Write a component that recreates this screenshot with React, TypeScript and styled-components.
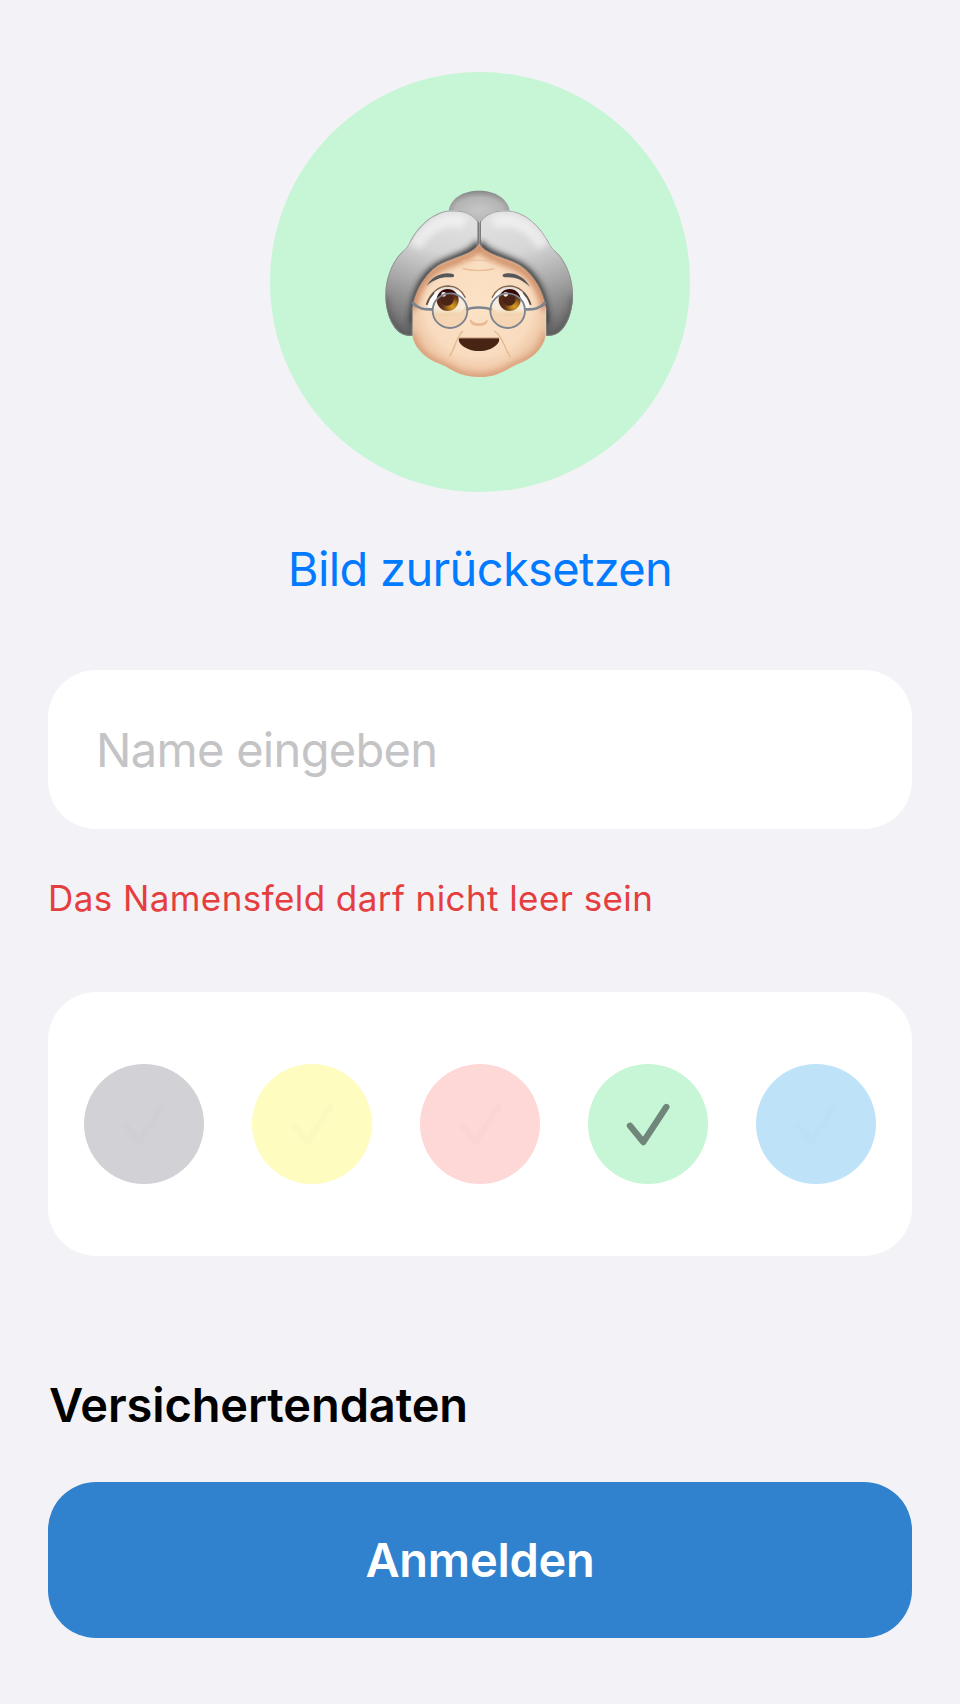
import React, { useState } from "react";
import styled, { createGlobalStyle } from "styled-components";

const GlobalStyle = createGlobalStyle`
  *, *::before, *::after { box-sizing: border-box; }
  body {
    margin: 0;
    background: #f2f2f7;
    font-family: Inter, "Liberation Sans", sans-serif;
  }
  button, input { font-family: inherit; }
`;

const Screen = styled.main`
  display: flex;
  flex-direction: column;
  height: 1704px;
  padding: 72px 48px 66px;
  background: #f2f2f7;
`;

const Avatar = styled.div<{ $color: string }>`
  display: flex;
  justify-content: center;
  align-items: center;
  align-self: center;
  flex: none;
  width: 420px;
  height: 420px;
  padding-top: 6px;
  border-radius: 50%;
  background: ${(p) => p.$color};
`;

const Portrait = styled.svg`
  width: 220px;
  height: 210px;
`;

const ResetButton = styled.button`
  align-self: center;
  margin-top: 48px;
  padding: 0;
  border: 0;
  background: none;
  color: #007aff;
  font-size: 47px;
  line-height: 58px;
  letter-spacing: -0.65px;
  white-space: nowrap;
`;

const NameField = styled.input`
  flex: none;
  width: 100%;
  height: 159px;
  margin-top: 72px;
  padding: 0 48px;
  border: 0;
  outline: 0;
  border-radius: 48px;
  background: #fff;
  color: #000;
  font-size: 47px;
  letter-spacing: -0.69px;
  &::placeholder { color: #c4c4c6; opacity: 1; }
`;

const ErrorText = styled.p`
  margin: 48px 0 0;
  color: #e53e3e;
  font-size: 35px;
  line-height: 43px;
  letter-spacing: 0.42px;
  white-space: nowrap;
`;

const Palette = styled.div`
  display: flex;
  justify-content: space-between;
  align-items: center;
  flex: none;
  height: 264px;
  margin-top: 72px;
  padding: 0 36px;
  border-radius: 48px;
  background: #fff;
`;

const Swatch = styled.button<{ $color: string }>`
  width: 120px;
  height: 120px;
  padding: 0;
  border: 0;
  border-radius: 50%;
  background: ${(p) => p.$color};
`;

const Check = styled.svg<{ $selected: boolean }>`
  display: block;
  width: 120px;
  height: 120px;
  fill: none;
  stroke: ${(p) => (p.$selected ? "#71867b" : "rgba(142, 142, 147, 0.026)")};
  stroke-width: 6.4;
  stroke-linecap: round;
  stroke-linejoin: round;
`;

const SectionTitle = styled.h2`
  margin: auto 0 49px 1px;
  color: #000;
  font-size: 47px;
  font-weight: 600;
  line-height: 57px;
  letter-spacing: -0.13px;
`;

const SubmitButton = styled.button`
  flex: none;
  height: 156px;
  padding: 0 0 2px;
  border: 0;
  border-radius: 48px;
  background: #3182ce;
  color: #fff;
  font-size: 47px;
  font-weight: 600;
  letter-spacing: -0.25px;
`;

const COLORS = ["#d1d1d6", "#fefcbf", "#fed7d7", "#c6f6d5", "#bee3f8"];

const FACE =
  "M127 350 L127 460 C128 500 165 535 205 550 C245 565 265 591 327 591 C389 591 409 565 449 550 C490 535 526 500 527 460 L527 350 C500 260 420 190 327 170 C234 190 154 260 127 350Z";
const HAIR_LEFT =
  "M327 130 C315 105 285 91 245 91 C185 93 140 145 118 188 C108 210 92 215 78 237 C56 270 46 310 46 345 C46 400 70 467 118 467 L127 467 L127 385 C133 340 160 285 205 256 C250 230 310 225 327 190Z";

function Lock({ flip }: { flip?: boolean }) {
  return (
    <g transform={flip ? "matrix(-1 0 0 1 655 0)" : undefined}>
      <path d={HAIR_LEFT} fill="url(#hair)" />
      <g clipPath="url(#lock)">
        <path d="M40 350 C44 410 75 478 130 475 L130 430" fill="none" stroke="#555" strokeWidth="30" opacity=".6" filter="url(#soft)" />
        <path d="M134 430 C136 338 164 290 209 262 C254 234 312 229 331 190" fill="none" stroke="#2c2c2c" strokeWidth="30" filter="url(#soft)" />
        <path d="M327 110 L327 195" stroke="#686868" strokeWidth="9" filter="url(#fine)" />
        <path d="M135 200 C175 130 235 110 285 128" fill="none" stroke="#fff" strokeWidth="38" opacity=".5" filter="url(#soft)" />
        <path d={HAIR_LEFT} fill="none" stroke="#888" strokeWidth="5" opacity=".7" filter="url(#fine)" />
      </g>
    </g>
  );
}

function Eye({ x, flip }: { x: number; flip?: boolean }) {
  const outline = "M-60 25 C-52 -12 -30 -34 2 -34 C30 -33 48 -12 57 14 C52 34 35 48 8 52 C-25 54 -50 44 -60 25Z";
  return (
    <g transform={`translate(${x} 355)`}>
      <g transform={flip ? "scale(-1 1)" : undefined}>
        <path d={outline} fill="url(#eyeWhite)" />
        <path d="M-63 19 C-51 -20 -25 -37 2 -37 C29 -36 45 -20 53 -2" fill="none" stroke="#80664f" strokeWidth="4" />
        <path d="M-63 19 C-58 4 -51 -7 -41 -17" fill="none" stroke="#5c5149" strokeWidth="5" filter="url(#fine)" />
      </g>
      <circle cx="0" cy="5" r="33" fill="url(#iris)" />
      <circle cx="-2" cy="2" r="20" fill="#260500" filter="url(#fine)" />
      <circle cx="-12" cy="-12" r="7" fill="#fff" filter="url(#fine)" />
    </g>
  );
}

function GrandmaPortrait() {
  return (
    <Portrait viewBox="0 0 660 630" aria-hidden="true">
      <defs>
        <filter id="soft" x="-30%" y="-30%" width="160%" height="160%"><feGaussianBlur stdDeviation="10" /></filter>
        <filter id="fine" filterUnits="userSpaceOnUse" x="-100" y="-100" width="860" height="830"><feGaussianBlur stdDeviation="1.8" /></filter>
        <clipPath id="lock"><path d={HAIR_LEFT} /></clipPath>
        <clipPath id="face"><path d={FACE} /></clipPath>
        <linearGradient id="hair" gradientUnits="userSpaceOnUse" x1="230" y1="95" x2="80" y2="467">
          <stop offset="0" stopColor="#e0e0e0" />
          <stop offset=".3" stopColor="#d6d6d6" />
          <stop offset=".6" stopColor="#a6a6a6" />
          <stop offset="1" stopColor="#606060" />
        </linearGradient>
        <radialGradient id="bun" cx=".5" cy=".6" r=".6">
          <stop offset="0" stopColor="#c6c6c6" />
          <stop offset=".65" stopColor="#b5b5b5" />
          <stop offset="1" stopColor="#858585" />
        </radialGradient>
        <radialGradient id="skin" gradientUnits="userSpaceOnUse" cx="327" cy="370" r="245">
          <stop offset="0" stopColor="#fce2c6" />
          <stop offset=".65" stopColor="#f9dcbf" />
          <stop offset="1" stopColor="#e5b591" />
        </radialGradient>
        <linearGradient id="eyeWhite" x1="0" y1="0" x2="0" y2="1">
          <stop offset="0" stopColor="#ded9d2" />
          <stop offset=".25" stopColor="#fff" />
          <stop offset=".75" stopColor="#fdf9f2" />
          <stop offset="1" stopColor="#f2d7ae" />
        </linearGradient>
        <radialGradient id="iris" cx=".72" cy=".8" r=".55">
          <stop offset="0" stopColor="#d89a08" />
          <stop offset=".38" stopColor="#9e6507" />
          <stop offset=".75" stopColor="#481803" />
          <stop offset="1" stopColor="#350700" />
        </radialGradient>
      </defs>

      <path d="M236 92 C242 55 278 32 327 32 C376 32 412 55 419 92 L370 130 L285 130Z" fill="url(#bun)" />
      <path d={FACE} fill="url(#skin)" />
      <g clipPath="url(#face)">
        <path d="M127 390 C133 340 162 290 207 264 C252 240 305 235 327 198 C349 235 402 240 447 264 C492 290 521 340 527 390" fill="none" stroke="#cc8861" strokeWidth="22" filter="url(#soft)" />
        <path d="M127 460 C128 500 165 535 205 550 C245 565 265 591 327 591 C389 591 409 565 449 550 C490 535 526 500 527 460" fill="none" stroke="#ce8b62" strokeWidth="18" opacity=".75" filter="url(#soft)" />
        <path d="M275 244 Q327 236 379 244" fill="none" stroke="#e9bd98" strokeWidth="3" filter="url(#fine)" />
        <path d="M278 266 Q327 277 374 266" fill="none" stroke="#e9b991" strokeWidth="3.5" filter="url(#fine)" />
      </g>
      <path d="M170 317 C187 286 222 275 247 281 C256 284 254 293 242 292 C216 290 194 297 170 317Z" fill="#56575a" />
      <path d="M480 321 C463 288 430 275 404 281 C393 284 397 293 410 292 C436 291 458 300 480 321Z" fill="#56575a" />

      <Eye x={233} />
      <Eye x={419} flip />

      <path d="M299 419 C301 438 315 436 326 438 C338 436 353 438 353 419" fill="#e9bb94" filter="url(#fine)" />
      <ellipse cx="327" cy="417" rx="23" ry="13" fill="#fae0c4" filter="url(#fine)" />
      <path d="M279 453 C258 470 259 498 238 530 M373 453 C398 469 401 499 421 532" fill="none" stroke="#e4b48e" strokeWidth="3.5" filter="url(#fine)" />

      <g fill="none" stroke="#7c8490" strokeWidth="5.5">
        <circle cx="240" cy="392" r="52" fill="rgba(225,180,120,.2)" />
        <circle cx="413" cy="392" r="52" fill="rgba(225,180,120,.2)" />
        <path d="M290 390 C302 380 350 380 364 390" strokeWidth="8" />
        <path d="M126 367 C145 387 163 389 188 388 M527 367 C508 387 490 389 466 388" strokeWidth="8" />
      </g>
      <path d="M267 475 H387 C389 482 386 489 380 494 C354 520 300 519 274 494 C268 489 265 482 267 475Z" fill="#482414" />
      <path d="M267 474 H387" stroke="#a77150" strokeWidth="2" />

      <Lock />
      <Lock flip />
      <path d="M126 367 L139 378 M527 367 L514 378" fill="none" stroke="#7c8490" strokeWidth="8" />
    </Portrait>
  );
}

export default function App() {
  const [color, setColor] = useState("#c6f6d5");
  const [name, setName] = useState("");

  return (
    <>
      <GlobalStyle />
      <Screen>
        <Avatar $color={color}>
          <GrandmaPortrait />
        </Avatar>
        <ResetButton>Bild zurücksetzen</ResetButton>
        <NameField placeholder="Name eingeben" value={name} onChange={(e) => setName(e.target.value)} />
        <ErrorText>Das Namensfeld darf nicht leer sein</ErrorText>
        <Palette>
          {COLORS.map((c) => (
            <Swatch key={c} $color={c} onClick={() => setColor(c)}>
              <Check viewBox="0 0 120 120" $selected={c === color}>
                <path d="M42 61.8 L55.3 78 L78.3 43" />
              </Check>
            </Swatch>
          ))}
        </Palette>
        <SectionTitle>Versichertendaten</SectionTitle>
        <SubmitButton>Anmelden</SubmitButton>
      </Screen>
    </>
  );
}
